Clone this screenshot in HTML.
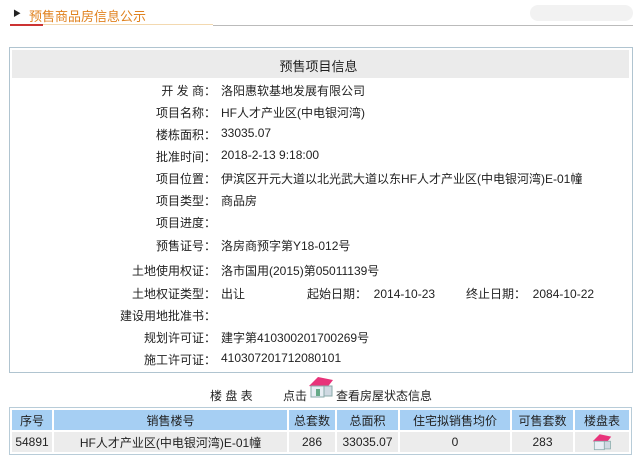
<html><head><style>
body{margin:0;width:637px;height:462px;background:#fff;font-family:"Liberation Sans","Noto Sans CJK SC",sans-serif;font-size:12px;color:#222;position:relative;overflow:hidden}
.a{position:absolute;white-space:nowrap}
.l{position:absolute;right:421px;text-align:right;white-space:nowrap}
.v{position:absolute;left:221px;white-space:nowrap}
table{position:absolute;left:9px;top:407px;width:623px;border-collapse:separate;border-spacing:2px;border:1px solid #b8ccd8;font-size:12px}
td{text-align:center;height:20px;padding:0}
tr.h td{background:#a6cff3;height:20px}
tr.d td{background:#ececec}
</style></head><body>
<div class="a" style="left:13px;top:8px;font-size:8px">▶</div>
<div class="a" style="left:29px;top:6px;color:#e0821f;font-size:13px">预售商品房信息公示</div>
<div class="a" style="left:10px;top:24px;width:33px;height:2px;background:#c33"></div>
<div class="a" style="left:43px;top:24px;width:170px;height:1px;background:#f3d9b0"></div>
<div class="a" style="left:213px;top:25px;width:420px;height:1px;background:#bbb"></div>
<div class="a" style="left:530px;top:5px;width:103px;height:16px;background:#f2f2f2;border-radius:8px"></div>
<div class="a" style="left:9px;top:47px;width:622px;height:324px;border:1px solid #b0c4d0"></div>
<div class="a" style="left:12px;top:50px;width:617px;height:28px;background:#ebebeb"></div>
<div class="a" style="left:0;top:56px;width:637px;text-align:center;font-size:13px">预售项目信息</div>
<div class="l" style="top:82px">开 发 商：</div><div class="v" style="top:82px">洛阳惠软基地发展有限公司</div>
<div class="l" style="top:104px">项目名称：</div><div class="v" style="top:104px">HF人才产业区(中电银河湾)</div>
<div class="l" style="top:126px">楼栋面积：</div><div class="v" style="top:126px">33035.07</div>
<div class="l" style="top:148px">批准时间：</div><div class="v" style="top:148px">2018-2-13 9:18:00</div>
<div class="l" style="top:170px">项目位置：</div><div class="v" style="top:170px">伊滨区开元大道以北光武大道以东HF人才产业区(中电银河湾)E-01幢</div>
<div class="l" style="top:192px">项目类型：</div><div class="v" style="top:192px">商品房</div>
<div class="l" style="top:214px">项目进度：</div>
<div class="l" style="top:237px">预售证号：</div><div class="v" style="top:237px">洛房商预字第Y18-012号</div>
<div class="l" style="top:262px">土地使用权证：</div><div class="v" style="top:262px">洛市国用(2015)第05011139号</div>
<div class="l" style="top:285px">土地权证类型：</div><div class="v" style="top:285px">出让</div>
<div class="a" style="left:307px;top:285px">起始日期：&nbsp; 2014-10-23</div>
<div class="a" style="left:466px;top:285px">终止日期：&nbsp; 2084-10-22</div>
<div class="l" style="top:307px">建设用地批准书：</div>
<div class="l" style="top:329px">规划许可证：</div><div class="v" style="top:329px">建字第410300201700269号</div>
<div class="l" style="top:351px">施工许可证：</div><div class="v" style="top:351px">410307201712080101</div>
<div class="a" style="left:210px;top:387px">楼 盘 表</div>
<div class="a" style="left:283px;top:387px">点击</div>
<svg class="a" style="left:306px;top:373px" width="30" height="28" viewBox="0 0 30 26"><polygon points="3,12 12,3 27,6 20,15" fill="#e8337a"/><rect x="5" y="12" width="13" height="11" fill="#e8eef4" stroke="#8aa" /><rect x="18" y="12" width="8" height="10" fill="#cfd9e2" stroke="#8aa"/><rect x="10" y="15" width="4" height="7" fill="#6a8"/></svg>
<div class="a" style="left:336px;top:387px">查看房屋状态信息</div>
<table><tr class="h"><td style="width:40px">序号</td><td style="width:233px">销售楼号</td><td style="width:46px">总套数</td><td style="width:61px">总面积</td><td style="width:110px">住宅拟销售均价</td><td style="width:61px">可售套数</td><td>楼盘表</td></tr>
<tr class="d"><td>54891</td><td>HF人才产业区(中电银河湾)E-01幢</td><td>286</td><td>33035.07</td><td>0</td><td>283</td><td><svg width="28" height="20" viewBox="0 0 30 26" style="vertical-align:middle"><polygon points="3,12 12,3 27,6 20,15" fill="#e8337a"/><rect x="5" y="12" width="13" height="11" fill="#e8eef4" stroke="#8aa"/><rect x="18" y="12" width="8" height="10" fill="#cfd9e2" stroke="#8aa"/></svg></td></tr></table>
</body></html>
